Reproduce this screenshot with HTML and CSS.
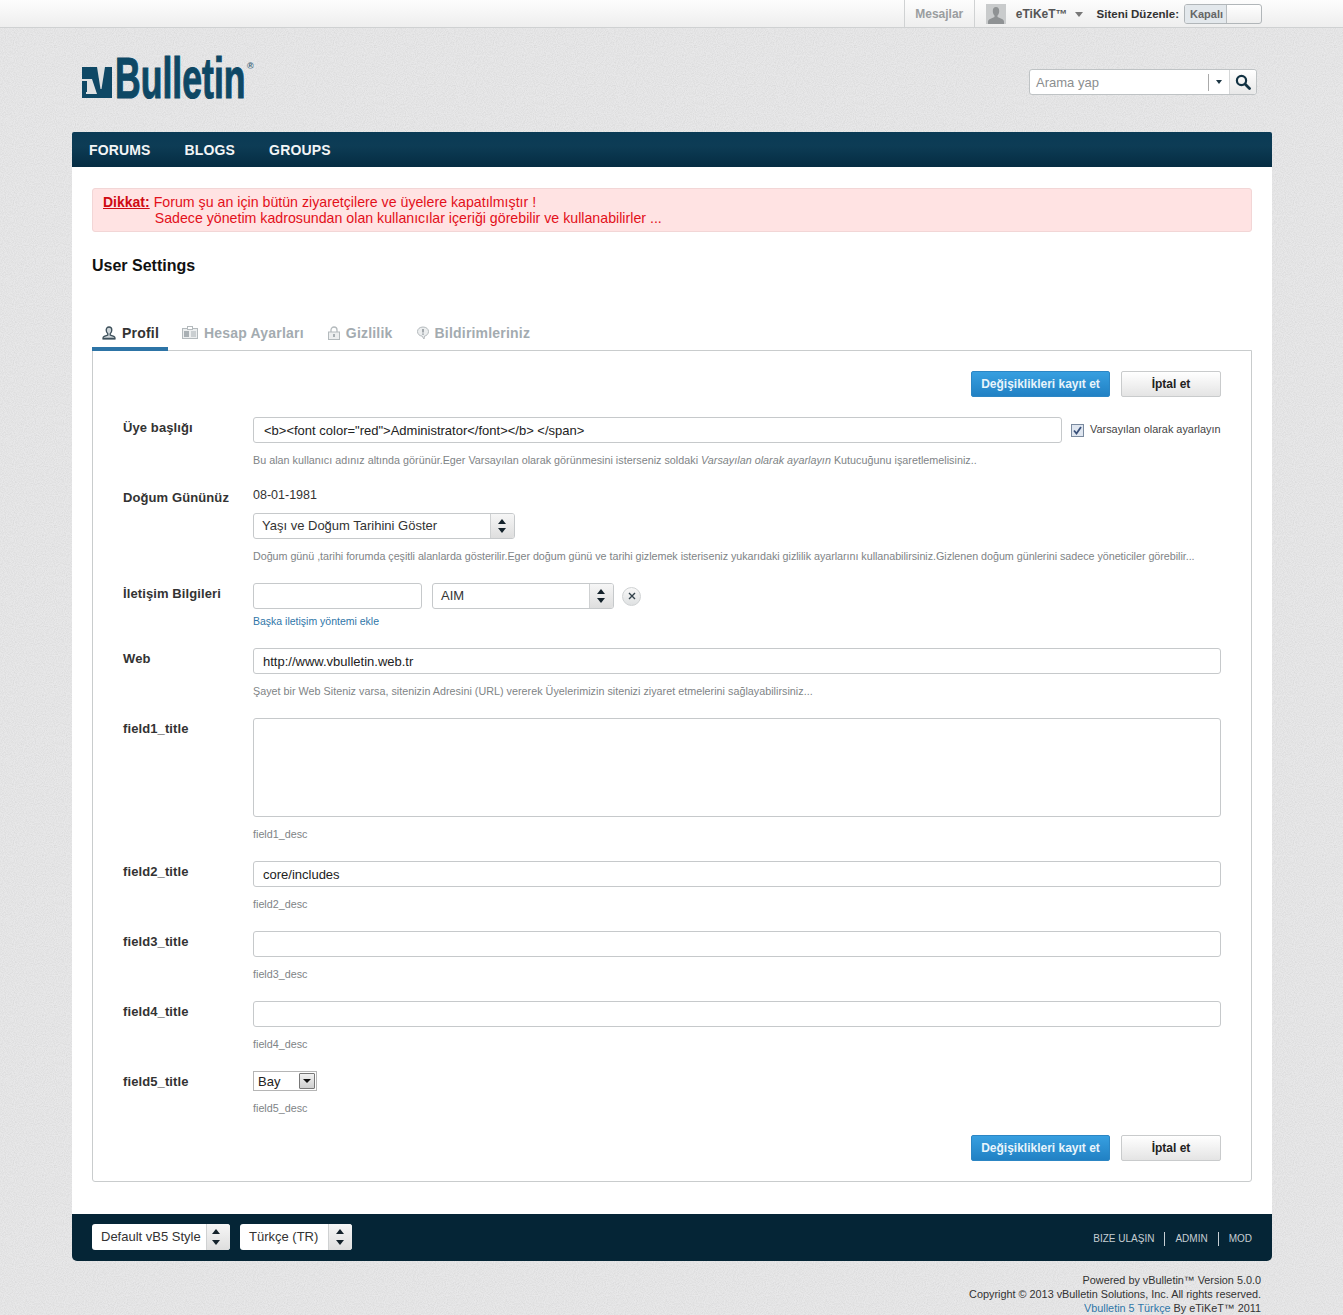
FILE: index.html
```html
<!DOCTYPE html>
<html lang="tr">
<head>
<meta charset="utf-8">
<title>User Settings</title>
<link rel="stylesheet" href="styles.css">
</head>
<body>
<div class="topbar">
  <div class="topbar-inner">
    <a class="top-msg">Mesajlar</a>
    <div class="top-user">
      <svg class="avatar" viewBox="0 0 20 20"><rect width="20" height="20" fill="#c9cbcc"/><path d="M10 3c2 0 3.200 1.600 3.200 4 0 2-.8 3.600-1.700 4.600v1.400l5 2.200c.8.400 1.500 1.200 1.500 2.800v2H2v-2c0-1.600.7-2.400 1.500-2.800l5-2.200v-1.400C7.600 10.600 6.800 9 6.800 7c0-2.400 1.200-4 3.200-4z" fill="#8f9294"/></svg>
      <span class="user-name">eTiKeT™</span><span class="user-caret"></span>
    </div>
    <span class="edit-label">Siteni Düzenle:</span>
    <div class="toggle"><span class="toggle-off">Kapalı</span></div>
  </div>
</div>

<div class="page">
  <header class="header">
    <div class="logo">
      <svg class="logo-mark" viewBox="0 0 30 31"><path d="M0 0h30v31H0z" fill="#0e4865"/><path d="M15 0h8l-3.500 22h-1z" fill="#dfe1e2"/><path d="M0 12h10l5 15H4v-2h1V14H0z" fill="#dfe1e2"/></svg>
      <span class="logo-word"><span class="logo-text">Bulletin</span></span><span class="logo-reg">®</span>
    </div>
    <div class="search">
      <span class="search-text">Arama yap</span>
      <span class="search-menu"><span class="search-caret"></span></span>
      <span class="search-btn">
        <svg viewBox="0 0 16 16" width="16" height="16"><circle cx="6.500" cy="6.500" r="4.600" fill="none" stroke="#123243" stroke-width="2.200"/><path d="M10 10l4.500 4.500" stroke="#123243" stroke-width="2.800" stroke-linecap="round"/></svg>
      </span>
    </div>
  </header>

  <nav class="nav">
    <a>FORUMS</a><a>BLOGS</a><a>GROUPS</a>
  </nav>

  <main class="content">
    <div class="alert">
      <strong class="alert-label">Dikkat:</strong>
      <div class="alert-text">Forum şu an için bütün ziyaretçilere ve üyelere kapatılmıştır !<br><span class="alert-second">Sadece yönetim kadrosundan olan kullanıcılar içeriği görebilir ve kullanabilirler ...</span></div>
    </div>

    <h1 class="title">User Settings</h1>

    <div class="tabs">
      <a class="tab tab-active">
        <svg viewBox="0 0 14 14" width="14" height="14"><path d="M7 1c1.800 0 2.800 1.300 2.800 3.100 0 1.600-.7 2.900-1.600 3.600v1.300l3.600 1.300c.7.300 1.200.9 1.200 1.700v.9H1v-.9c0-.8.500-1.400 1.200-1.700L5.800 9V7.700C4.900 7 4.200 5.700 4.200 4.100 4.200 2.300 5.200 1 7 1z" fill="#cfd6da" stroke="#3d4f5a" stroke-width="1.300"/><path d="M1 12.500h12" stroke="#3d4f5a" stroke-width="1.500"/></svg>
        Profil</a>
      <a class="tab">
        <svg viewBox="0 0 16 14" width="16" height="14"><rect x=".5" y="2.500" width="15" height="10" fill="#eceeef" stroke="#b4babd"/><rect x="5.500" y="0.500" width="5" height="3" fill="#fff" stroke="#b4babd"/><rect x="2" y="5" width="5" height="6" fill="#a9b0b4"/><path d="M9 6h5M9 8h5M9 10h5" stroke="#a9b0b4"/></svg>
        Hesap Ayarları</a>
      <a class="tab tab-narrow">
        <svg viewBox="0 0 14 14" width="14" height="14"><path d="M4 6V4a3 3 0 016 0v2" fill="none" stroke="#b4babd" stroke-width="1.300"/><rect x="1.500" y="6" width="11" height="7.500" fill="#eceeef" stroke="#b4babd"/><rect x="6" y="8" width="2" height="3" fill="#a9b0b4"/></svg>
        Gizlilik</a>
      <a class="tab tab-narrow">
        <svg viewBox="0 0 14 14" width="14" height="14"><path d="M7 1c3.300 0 5.500 2 5.500 4.500S10.300 10 8.500 10L8 13 6 10C3.500 10 1.500 8 1.500 5.500S3.700 1 7 1z" fill="#eceeef" stroke="#b4babd"/><path d="M7 3v3.500M7 7.500v1.200" stroke="#8a9298" stroke-width="1.500"/></svg>
        Bildirimleriniz</a>
    </div>

    <form class="panel">
      <div class="actions">
        <button type="button" class="btn btn-primary">Değişiklikleri kayıt et</button>
        <button type="button" class="btn">İptal et</button>
      </div>

      <div class="row">
        <label class="row-label">Üye başlığı</label>
        <div class="row-field">
          <div class="inline">
            <input class="input input-grow" value='&lt;b&gt;&lt;font color="red"&gt;Administrator&lt;/font&gt;&lt;/b&gt; &lt;/span&gt;'>
            <span class="check"><svg viewBox="0 0 13 13" width="13" height="13"><rect x=".5" y=".5" width="12" height="12" fill="#dfe6f0" stroke="#7a8a9f"/><path d="M3 6.500l2.500 3L10 3" fill="none" stroke="#39507a" stroke-width="1.800"/></svg></span>
            <span class="check-label">Varsayılan olarak ayarlayın</span>
          </div>
          <p class="help help-wide">Bu alan kullanıcı adınız altında görünür.Eger Varsayılan olarak görünmesini isterseniz soldaki <em>Varsayılan olarak ayarlayın</em> Kutucuğunu işaretlemelisiniz..</p>
        </div>
      </div>

      <div class="row">
        <label class="row-label">Doğum Gününüz</label>
        <div class="row-field">
          <div class="date">08-01-1981</div>
          <div class="select select-birth"><span class="select-value">Yaşı ve Doğum Tarihini Göster</span><span class="arrows"></span></div>
          <p class="help help-tight">Doğum günü ,tarihi forumda çeşitli alanlarda gösterilir.Eger doğum günü ve tarihi gizlemek isteriseniz yukarıdaki gizlilik ayarlarını kullanabilirsiniz.Gizlenen doğum günlerini sadece yöneticiler görebilir...</p>
        </div>
      </div>

      <div class="row">
        <label class="row-label">İletişim Bilgileri</label>
        <div class="row-field">
          <div class="inline">
            <input class="input input-contact">
            <div class="select select-contact"><span class="select-value">AIM</span><span class="arrows"></span></div>
            <span class="remove"><svg viewBox="0 0 8 8" width="8" height="8"><path d="M1 1l6 6M7 1L1 7" stroke="#33424b" stroke-width="1.400"/></svg></span>
          </div>
          <a class="add-link">Başka iletişim yöntemi ekle</a>
        </div>
      </div>

      <div class="row">
        <label class="row-label">Web</label>
        <div class="row-field">
          <input class="input" value="http://www.vbulletin.web.tr">
          <p class="help help-wide">Şayet bir Web Siteniz varsa, sitenizin Adresini (URL) vererek Üyelerimizin sitenizi ziyaret etmelerini sağlayabilirsiniz...</p>
        </div>
      </div>

      <div class="row">
        <label class="row-label">field1_title</label>
        <div class="row-field">
          <textarea class="input textarea"></textarea>
          <p class="help">field1_desc</p>
        </div>
      </div>

      <div class="row">
        <label class="row-label">field2_title</label>
        <div class="row-field">
          <input class="input" value="core/includes">
          <p class="help">field2_desc</p>
        </div>
      </div>

      <div class="row">
        <label class="row-label">field3_title</label>
        <div class="row-field">
          <input class="input">
          <p class="help">field3_desc</p>
        </div>
      </div>

      <div class="row">
        <label class="row-label">field4_title</label>
        <div class="row-field">
          <input class="input">
          <p class="help">field4_desc</p>
        </div>
      </div>

      <div class="row">
        <label class="row-label">field5_title</label>
        <div class="row-field">
          <div class="native-select"><span>Bay</span><span class="native-btn"></span></div>
          <p class="help">field5_desc</p>
        </div>
      </div>

      <div class="actions">
        <button type="button" class="btn btn-primary">Değişiklikleri kayıt et</button>
        <button type="button" class="btn">İptal et</button>
      </div>
    </form>
  </main>

  <footer class="footer">
    <div class="footer-selects">
      <div class="select select-style"><span class="select-value">Default vB5 Style</span><span class="arrows"></span></div>
      <div class="select select-lang"><span class="select-value">Türkçe (TR)</span><span class="arrows"></span></div>
    </div>
    <div class="footer-links"><a>BIZE ULAŞIN</a><a>ADMIN</a><a>MOD</a></div>
  </footer>

  <div class="credits">
    Powered by vBulletin™ Version 5.0.0<br>
    Copyright © 2013 vBulletin Solutions, Inc. All rights reserved.<br>
    <a>Vbulletin 5 Türkçe</a> By eTiKeT™ 2011
  </div>
</div>
</body>
</html>
```

FILE: styles.css
```css
* { box-sizing: border-box; }
html, body { margin: 0; padding: 0; }
body {
  font-family: "Liberation Sans", Arial, sans-serif;
  font-size: 12px;
  color: #333;
  background-color: #e8e8e9;
  background-image: url("data:image/svg+xml,%3Csvg xmlns='http://www.w3.org/2000/svg' width='160' height='160'%3E%3Cfilter id='n'%3E%3CfeTurbulence type='fractalNoise' baseFrequency='.9' numOctaves='2' stitchTiles='stitch'/%3E%3CfeColorMatrix values='0 0 0 0 .6 0 0 0 0 .6 0 0 0 0 .6 .9 0 0 0 -.3'/%3E%3C/filter%3E%3Crect width='160' height='160' filter='url(%23n)'/%3E%3C/svg%3E");
  height: 1315px;
  overflow: hidden;
}
a { cursor: pointer; }

/* top bar */
.topbar {
  height: 28px;
  background: linear-gradient(#fdfdfd, #eeeeee);
  border-bottom: 1px solid #cfd1d2;
}
.topbar-inner {
  width: 1200px;
  margin-left: 72px;
  height: 27px;
  padding-right: 10px;
  display: flex;
  justify-content: flex-end;
  align-items: center;
  font-weight: bold;
}
.top-msg {
  height: 27px;
  width: 71px;
  display: flex;
  align-items: center;
  justify-content: center;
  color: #9a9d9f;
  border-left: 1px solid #d0d2d3;
  border-right: 1px solid #d0d2d3;
}
.top-user { display: flex; align-items: center; padding-left: 11px; }
.avatar { width: 20px; height: 20px; display: block; margin-right: 10px; }
.user-name { color: #555; }
.user-caret {
  width: 0; height: 0;
  margin: 2px 0 0 7px;
  border-left: 4px solid transparent;
  border-right: 4px solid transparent;
  border-top: 5px solid #777;
}
.edit-label { margin: 0 5px 0 14px; color: #333; font-size: 11.5px; }
.toggle {
  width: 78px; height: 20px;
  border: 1px solid #b1b6b9;
  border-radius: 3px;
  background: linear-gradient(#fff, #eee);
  overflow: hidden;
}
.toggle-off {
  display: block;
  width: 42px; height: 18px;
  line-height: 18px;
  padding-left: 5px;
  font-size: 11px;
  color: #666;
  background: #e3e8ec;
  border-right: 1px solid #b9bec1;
}

/* page */
.page { width: 1200px; margin-left: 72px; }
.header {
  height: 104px;
  display: flex;
  justify-content: space-between;
  padding: 27px 15px 0 10px;
}
.logo { display: flex; align-items: flex-start; height: 45px; }
.logo-mark { width: 30px; height: 31px; margin-top: 12px; display: block; }
.logo-word { display: block; width: 133px; height: 45px; margin-left: 3px; overflow: visible; }
.logo-text {
  display: inline-block;
  font-size: 56.5px;
  line-height: 47px;
  font-weight: bold;
  color: #0e4865;
  -webkit-text-stroke: 1.100px #0e4865;
  transform: scaleX(.63);
  transform-origin: left top;
}
.logo-reg { font-size: 9px; font-weight: bold; color: #3d6478; margin-top: 6px; margin-left: -1px; }
.search {
  width: 228px; height: 26px;
  margin-top: 14px;
  display: flex;
  align-items: center;
  background: #fff;
  border: 1px solid #bfc3c5;
  border-radius: 3px;
}
.search-text { flex: 1; padding: 1px 0 0 6px; font-size: 13px; color: #8b8e90; }
.search-menu {
  width: 21px; height: 17px;
  border-left: 1px solid #aaa;
  display: flex; align-items: center; justify-content: center;
}
.search-caret {
  width: 0; height: 0;
  border-left: 3.500px solid transparent;
  border-right: 3.500px solid transparent;
  border-top: 4px solid #1d3644;
}
.search-btn {
  width: 27px; height: 24px;
  display: flex; align-items: center; justify-content: center;
  background: linear-gradient(#fff, #e8e8e8);
  border-left: 1px solid #d5d7d8;
  border-radius: 0 3px 3px 0;
}

/* nav */
.nav {
  height: 35px;
  background: linear-gradient(#0a3a55, #0d3c55 40%, #052c42);
  border-radius: 2px 2px 0 0;
  display: flex;
  align-items: center;
  padding-left: 17px;
  gap: 34px;
}
.nav a { color: #f3f5f6; font-size: 14px; font-weight: bold; letter-spacing: .15px; }

/* content */
.content { background: #fff; height: 1047px; padding: 21px 20px 0; }
.alert {
  height: 44px;
  padding: 5px 10px;
  display: flex;
  gap: 4px;
  background: #ffe3e3;
  border: 1px solid #f2d6d6;
  border-radius: 3px;
  font-size: 14.2px;
  line-height: 16px;
  color: #e3101a;
}
.alert-label { color: #cf0a12; text-decoration: underline; font-size: 14px; }
.alert-second { margin-left: 1px; }
.title { margin: 24px 0 0; font-size: 16px; line-height: 19px; font-weight: bold; color: #111; }
.tabs { display: flex; height: 31px; margin-top: 44px; position: relative; }
.tab {
  height: 32px;
  display: flex;
  align-items: center;
  gap: 6px;
  padding: 0 10px 4px;
  margin-right: 3px;
  font-size: 14px;
  font-weight: bold;
  color: #a3abb0;
  letter-spacing: .2px;
}
.tab-narrow { gap: 5px; }
.tab-active {
  color: #333;
  border-bottom: 4px solid #2d74a6;
  padding: 0 9px 0 10px;
  margin-right: 4px;
  position: relative;
  z-index: 1;
}

/* panel */
.panel {
  background: #fff;
  border: 1px solid #c9cccd;
  border-radius: 0 0 3px 3px;
  padding: 20px 30px;
  height: 832px;
}
.actions { display: flex; justify-content: flex-end; gap: 11px; }
.btn {
  width: 100px; height: 26px;
  padding: 0;
  font: bold 12px "Liberation Sans", Arial, sans-serif;
  color: #222;
  background: linear-gradient(#fff, #e4e4e4);
  border: 1px solid #c9cbcc;
  border-radius: 2px;
}
.btn-primary {
  width: 139px;
  color: #e8f4fb;
  background: linear-gradient(#379fe0, #2181c4);
  border: 1px solid #2c86c4;
}
.row { display: flex; margin-top: 20px; }
.row-label { width: 130px; flex: none; padding-top: 3px; font-size: 13px; font-weight: bold; line-height: 16px; color: #333; letter-spacing: .1px; }
.row-field { flex: 1; min-width: 0; }
.row + .actions { margin-top: 20px; }
.inline { display: flex; align-items: center; }
.input {
  display: block;
  width: 100%;
  height: 26px;
  padding: 0 9px;
  font: 13px "Liberation Sans", Arial, sans-serif;
  color: #222;
  background: #fff;
  border: 1px solid #c6c9cb;
  border-radius: 3px;
  outline: none;
}
.input-grow { width: 809px; flex: none; padding: 0 10px; }
.input-contact { width: 169px; flex: none; }
.textarea { height: 99px; resize: none; }
.check { margin-left: 9px; height: 13px; display: block; }
.check svg { display: block; }
.check-label { margin: 0 0 2px 6px; font-size: 10.9px; white-space: nowrap; color: #444; }
.help { margin: 10px 0 0; font-size: 10.75px; line-height: 14px; color: #808486; white-space: nowrap; }
.help-wide { letter-spacing: .02px; }
.help-tight { letter-spacing: -.035px; }
.date { height: 16px; line-height: 16px; margin-bottom: 10px; font-size: 12.5px; color: #333; }
.select {
  height: 26px;
  display: flex;
  background: #fff;
  border: 1px solid #c6c9cb;
  border-radius: 3px;
  overflow: hidden;
}
.select-value { flex: 1; line-height: 24px; white-space: nowrap; font-size: 13px; color: #333; }
.arrows {
  width: 24px;
  flex: none;
  position: relative;
  background: linear-gradient(#f6f6f6, #dedede);
  border-left: 1px solid #cfd1d2;
}
.arrows::before, .arrows::after {
  content: "";
  position: absolute;
  left: 7px;
  border-left: 4.500px solid transparent;
  border-right: 4.500px solid transparent;
}
.arrows::before { top: 5px; border-bottom: 5px solid #14222b; }
.arrows::after { bottom: 5px; border-top: 5px solid #14222b; }
.select-birth { width: 262px; }
.select-birth .select-value { padding-left: 8px; }
.select-contact { width: 182px; margin-left: 10px; }
.select-contact .select-value { padding-left: 8px; }
.remove {
  width: 19px; height: 19px;
  margin-left: 8px;
  display: flex; align-items: center; justify-content: center;
  background: linear-gradient(#f8f8f8, #dfe1e2);
  border: 1px solid #cfd2d3;
  border-radius: 50%;
}
.add-link { display: block; margin-top: 5px; font-size: 10.5px; line-height: 14px; color: #2f76a8; }
.native-select {
  width: 64px; height: 20px;
  display: flex;
  align-items: center;
  justify-content: space-between;
  padding: 0 1px 0 4px;
  font-size: 13px;
  color: #222;
  border: 1px solid #b5b5b5;
  background: #fff;
}
.native-btn {
  width: 16px; height: 16px;
  position: relative;
  background: linear-gradient(#f2f2f2, #cfcfcf);
  border: 1px solid #777;
  border-radius: 1px;
}
.native-btn::after {
  content: "";
  position: absolute;
  left: 3px; top: 5px;
  border-left: 4px solid transparent;
  border-right: 4px solid transparent;
  border-top: 4px solid #111;
}

/* footer */
.footer {
  height: 47px;
  background: #052536;
  border-radius: 0 0 5px 5px;
  display: flex;
  justify-content: space-between;
  align-items: center;
  padding: 0 20px 1px;
}
.footer-selects { display: flex; gap: 10px; }
.select-style { width: 138px; border: none; }
.select-lang { width: 112px; border: none; }
.select-style .arrows::before, .select-style .arrows::after { left: 5px; }
.footer .select-value { padding-left: 9px; line-height: 26px; }
.footer-links { display: flex; align-items: center; font-size: 10px; color: #c6ced3; margin-top: 3px; }
.footer-links a { display: block; line-height: 14px; padding: 0 10px; border-left: 1px solid #c6ced3; }
.footer-links a:first-child { border-left: none; }
.footer-links a:last-child { padding-right: 0; }
.credits {
  margin-top: 12px;
  padding-right: 11px;
  text-align: right;
  font-size: 10.85px;
  line-height: 14px;
  color: #333;
}
.credits a { color: #2f76a8; }
```
